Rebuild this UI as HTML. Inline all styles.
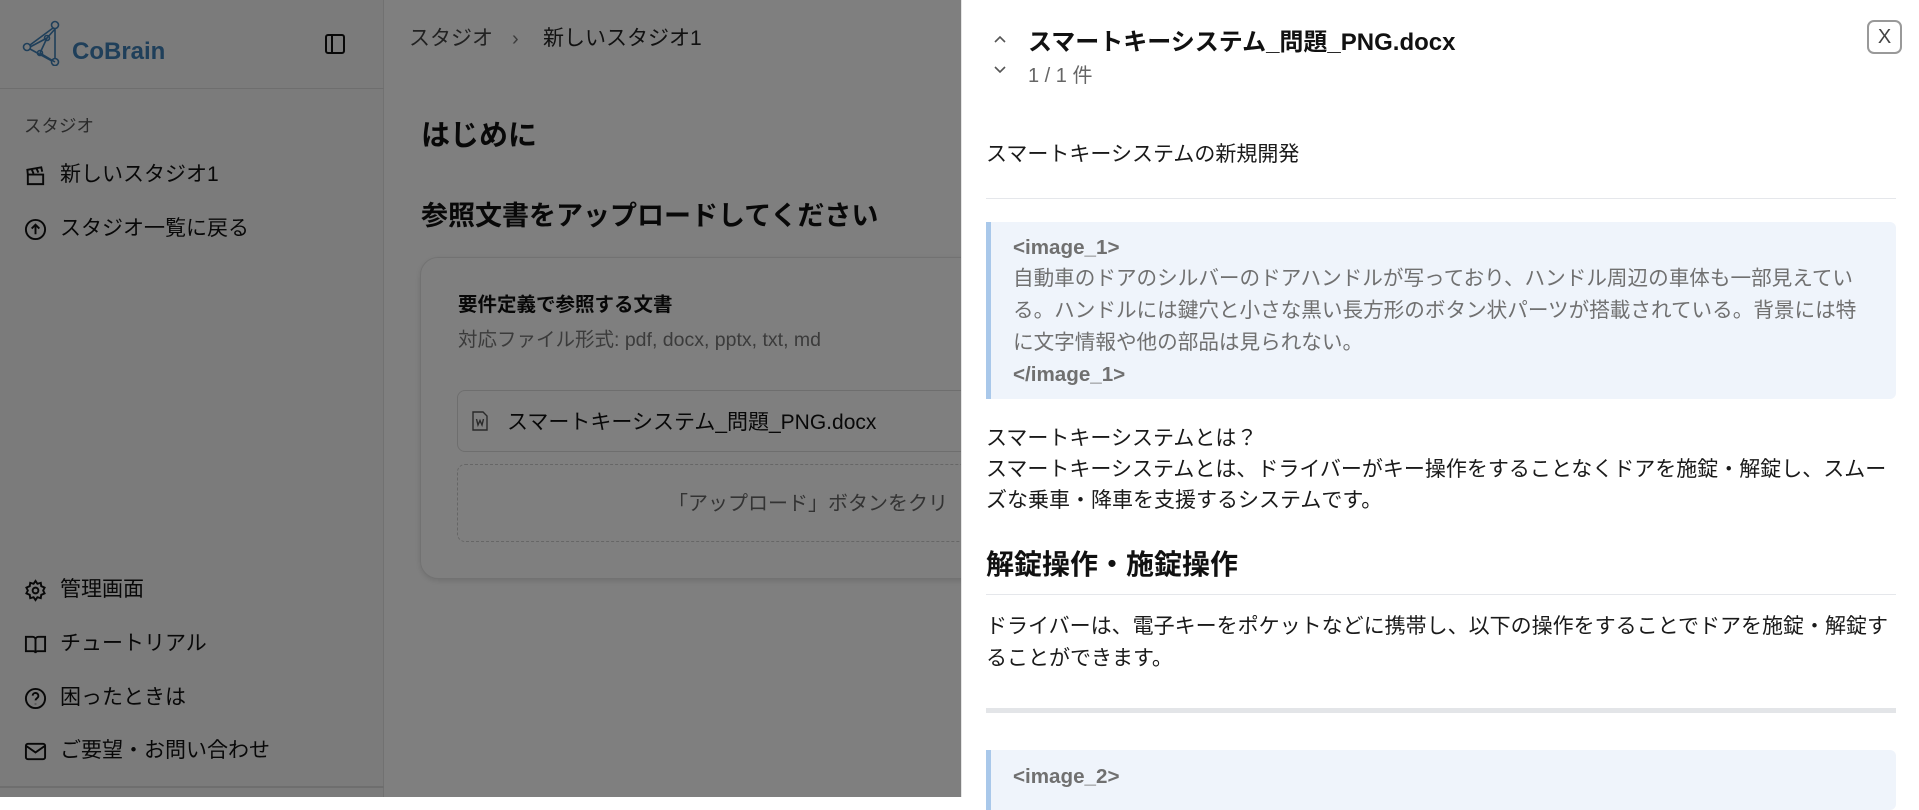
<!DOCTYPE html>
<html><head><meta charset="utf-8">
<style>
*{margin:0;padding:0;box-sizing:border-box}
body{width:1919px;height:797px;overflow:hidden;position:relative;background:#fff;font-family:"Liberation Sans","Noto Sans CJK JP",sans-serif;color:#111}
.a{position:absolute;white-space:nowrap}
#side{position:absolute;left:0;top:0;width:384px;height:797px;background:#f6f6f6;border-right:1px solid #e2e2e2}
.mi{position:absolute;left:24px;font-size:21px;line-height:30px;display:flex;align-items:center;gap:13px}
.mi svg{width:23px;height:23px;flex:none}
#ov{position:absolute;left:0;top:0;width:961px;height:797px;background:rgba(0,0,0,0.5)}
#panel{position:absolute;left:961px;top:0;width:958px;height:797px;background:#fff}
.p{position:absolute;left:25px;font-size:21px;line-height:31px;white-space:nowrap;color:#1a1a1a}
.bq{position:absolute;left:25px;width:910px;background:#eff4fb;border-left:5px solid #a9c8ea;border-radius:0 6px 6px 0}
.bq div{position:absolute;left:22px;font-size:20.6px;line-height:31.5px;color:#707070;white-space:nowrap}
</style></head><body>
<div id="side">
 <svg class="a" style="left:22px;top:20px" width="44" height="46" viewBox="0 0 44 46" fill="none" stroke="#3f7fb5" stroke-width="1.6">
  <circle cx="33" cy="5" r="3.5"/><circle cx="5" cy="27" r="3.5"/><circle cx="33" cy="42" r="3.5"/><circle cx="25" cy="18" r="2.5"/><circle cx="18" cy="33" r="2.5"/>
  <path d="M31 8L8 25M33 9V38M8 29L30 41M25 18L18 33M8 27L25 18M18 33L33 42M25 18L33 9"/>
 </svg>
 <div class="a" style="left:72px;top:36px;font-size:24px;font-weight:bold;color:#3f7fb5;line-height:32px">CoBrain</div>
 <svg class="a" style="left:324px;top:33px" width="22" height="22" viewBox="0 0 22 22" fill="none" stroke="#111" stroke-width="2"><rect x="2" y="2" width="18" height="18" rx="2"/><path d="M8 2V20"/></svg>
 <div class="a" style="left:0;top:88px;width:384px;border-top:1px solid #ddd"></div>
 <div class="a" style="left:24px;top:114px;font-size:17.5px;color:#555;line-height:24px">スタジオ</div>
 <div class="mi" style="top:160px"><svg viewBox="0 0 24 24" fill="none" stroke="#111" stroke-width="2"><path d="M4 11V21H20V11H4ZM4 11L3.5 6 18 3.5 19 8M8 5.5L10 10M13 4.5L15 9"/></svg>新しいスタジオ1</div>
 <div class="mi" style="top:214px"><svg viewBox="0 0 24 24" fill="none" stroke="#111" stroke-width="2"><circle cx="12" cy="12" r="10"/><path d="M12 17V7M8 11L12 7 16 11"/></svg>スタジオ一覧に戻る</div>
 <div class="mi" style="top:575px"><svg viewBox="0 0 24 24" fill="none" stroke="#111" stroke-width="2"><circle cx="12" cy="12" r="3"/><path d="M12 2L14 5 17.5 4 18 7.5 21.5 9 20 12 21.5 15 18 16.5 17.5 20 14 19 12 22 10 19 6.5 20 6 16.5 2.5 15 4 12 2.5 9 6 7.5 6.5 4 10 5Z"/></svg>管理画面</div>
 <div class="mi" style="top:629px"><svg viewBox="0 0 24 24" fill="none" stroke="#111" stroke-width="2"><path d="M2 4H9A3 3 0 0 1 12 7V21A2 2 0 0 0 10 19H2ZM22 4H15A3 3 0 0 0 12 7V21A2 2 0 0 1 14 19H22Z"/></svg>チュートリアル</div>
 <div class="mi" style="top:683px"><svg viewBox="0 0 24 24" fill="none" stroke="#111" stroke-width="2"><circle cx="12" cy="12" r="10"/><path d="M9 9A3 3 0 0 1 15 9.5C15 11.5 12 12 12 14M12 17.5V18"/></svg>困ったときは</div>
 <div class="mi" style="top:736px"><svg viewBox="0 0 24 24" fill="none" stroke="#111" stroke-width="2"><rect x="2" y="4" width="20" height="16" rx="2"/><path d="M2 6L12 13 22 6"/></svg>ご要望・お問い合わせ</div>
 <div class="a" style="left:0;top:786px;width:384px;border-top:2px solid #ddd"></div>
</div>
<div class="a" style="left:409px;top:24px;font-size:21px;line-height:30px;color:#444">スタジオ</div>
<div class="a" style="left:512px;top:24px;font-size:20px;line-height:30px;color:#777">›</div>
<div class="a" style="left:543px;top:24px;font-size:21px;line-height:30px;color:#222">新しいスタジオ1</div>
<div class="a" style="left:421px;top:116px;font-size:29px;font-weight:bold;line-height:40px">はじめに</div>
<div class="a" style="left:421px;top:197px;font-size:27px;font-weight:bold;line-height:38px">参照文書をアップロードしてください</div>
<div class="a" style="left:420px;top:257px;width:700px;height:322px;border:1px solid #e5e5e5;border-radius:18px;background:#fff;box-shadow:0 2px 6px rgba(0,0,0,0.12)"></div>
<div class="a" style="left:458px;top:291px;font-size:19.5px;font-weight:bold;line-height:28px">要件定義で参照する文書</div>
<div class="a" style="left:458px;top:326px;font-size:19.5px;line-height:28px;color:#777">対応ファイル形式: pdf, docx, pptx, txt, md</div>
<div class="a" style="left:457px;top:390px;width:700px;height:62px;border:1px solid #ddd;border-radius:8px"></div>
<svg class="a" style="left:472px;top:411px" width="16" height="20" viewBox="0 0 16 20" fill="none" stroke="#555" stroke-width="1.4"><path d="M1 1H11L15 5V19H1Z"/><path d="M4.5 8L6 14 8 9.5 10 14 11.5 8"/></svg>
<div class="a" style="left:507px;top:408px;font-size:21px;line-height:30px">スマートキーシステム_問題_PNG.docx</div>
<div class="a" style="left:457px;top:464px;width:700px;height:78px;border:1px dashed #ccc;border-radius:8px"></div>
<div class="a" style="left:668px;top:489px;font-size:20px;line-height:30px;color:#666">「アップロード」ボタンをクリ</div>
<div id="ov"></div>
<div id="panel">
 <div class="a" style="left:0;top:0;height:797px;border-left:1px solid #e5e5e5"></div>
 <svg class="a" style="left:32px;top:34px" width="14" height="10" viewBox="0 0 14 10" fill="none" stroke="#555" stroke-width="1.6"><path d="M2 8L7 3 12 8"/></svg>
 <svg class="a" style="left:32px;top:65px" width="14" height="10" viewBox="0 0 14 10" fill="none" stroke="#555" stroke-width="1.6"><path d="M2 2L7 7 12 2"/></svg>
 <div class="a" style="left:67px;top:26px;font-size:24px;font-weight:bold;line-height:34px;color:#111">スマートキーシステム_問題_PNG.docx</div>
 <div class="a" style="left:67px;top:62px;font-size:20px;line-height:28px;color:#666">1 / 1 件</div>
 <div class="a" style="left:906px;top:20px;width:35px;height:34px;border:2px solid #999;border-radius:7px;text-align:center;font-size:20px;line-height:30px;color:#444">X</div>
 <div class="p" style="top:139px">スマートキーシステムの新規開発</div>
 <div class="a" style="left:25px;top:198px;width:910px;border-top:1px solid #e5e7eb"></div>
 <div class="bq" style="top:222px;height:177px">
  <div style="top:10px;font-weight:bold">&lt;image_1&gt;</div>
  <div style="top:41px">自動車のドアのシルバーのドアハンドルが写っており、ハンドル周辺の車体も一部見えてい</div>
  <div style="top:73px">る。ハンドルには鍵穴と小さな黒い長方形のボタン状パーツが搭載されている。背景には特</div>
  <div style="top:105px">に文字情報や他の部品は見られない。</div>
  <div style="top:137px;font-weight:bold">&lt;/image_1&gt;</div>
 </div>
 <div class="p" style="top:423px">スマートキーシステムとは？</div>
 <div class="p" style="top:454px">スマートキーシステムとは、ドライバーがキー操作をすることなくドアを施錠・解錠し、スムー</div>
 <div class="p" style="top:485px">ズな乗車・降車を支援するシステムです。</div>
 <div class="a" style="left:25px;top:545px;font-size:28px;font-weight:bold;line-height:40px;color:#111">解錠操作・施錠操作</div>
 <div class="a" style="left:25px;top:594px;width:910px;border-top:1px solid #e5e7eb"></div>
 <div class="p" style="top:611px">ドライバーは、電子キーをポケットなどに携帯し、以下の操作をすることでドアを施錠・解錠す</div>
 <div class="p" style="top:643px">ることができます。</div>
 <div class="a" style="left:25px;top:708px;width:910px;height:5px;background:#e3e5e8"></div>
 <div class="bq" style="top:750px;height:60px">
  <div style="top:11px;font-weight:bold">&lt;image_2&gt;</div>
 </div>
</div>
</body></html>
